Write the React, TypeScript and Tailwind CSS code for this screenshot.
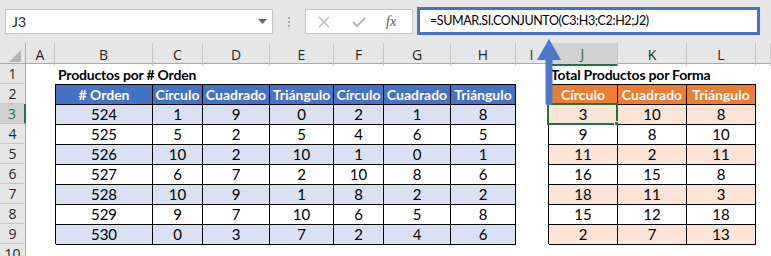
import React from 'react';

const cols =
  'grid grid-cols-[26px_29px_98px_50px_67px_64px_50px_67px_65px_32px_70px_69px_69px_15px]';

const letters = ['A', 'B', 'C', 'D', 'E', 'F', 'G', 'H', 'I', 'J', 'K', 'L', ''];

const orders = [
  ['524', '1', '9', '0', '2', '1', '8'],
  ['525', '5', '2', '5', '4', '6', '5'],
  ['526', '10', '2', '10', '1', '0', '1'],
  ['527', '6', '7', '2', '10', '8', '6'],
  ['528', '10', '9', '1', '8', '2', '2'],
  ['529', '9', '7', '10', '6', '5', '8'],
  ['530', '0', '3', '7', '2', '4', '6'],
];

const totals = [
  ['3', '10', '8'],
  ['9', '8', '10'],
  ['11', '2', '11'],
  ['16', '15', '8'],
  ['18', '11', '3'],
  ['15', '12', '18'],
  ['2', '7', '13'],
];

const head1 = ['# Orden', 'Círculo', 'Cuadrado', 'Triángulo', 'Círculo', 'Cuadrado', 'Triángulo'];
const head2 = ['Círculo', 'Cuadrado', 'Triángulo'];

const FormulaBar: React.FC = () => (
  <div className="h-[43px] bg-[#e6e6e6] flex items-start pt-[9px] pl-[5px]">
    {/* Name box */}
    <div className="w-[268px] h-[25px] bg-white border border-[#c6c6c6] flex items-center justify-between pl-[6px] pr-[5px]">
      <span className="text-[14px] text-[#222]">J3</span>
      <svg width="9" height="5" viewBox="0 0 9 5">
        <path d="M0 0 H9 L4.5 5 Z" fill="#6b6b6b" />
      </svg>
    </div>
    <div className="w-[32px] h-[25px] flex flex-col items-center justify-center gap-[2px]">
      <div className="w-[2px] h-[2px] bg-[#a8a8a8]" />
      <div className="w-[2px] h-[2px] bg-[#a8a8a8]" />
      <div className="w-[2px] h-[2px] bg-[#a8a8a8]" />
    </div>
    {/* Cancel / enter / fx */}
    <div className="w-[108px] h-[25px] bg-white border border-[#c6c6c6] flex items-center pl-[12px]">
      <svg width="12" height="12" viewBox="0 0 12 12">
        <path d="M1 1 L11 11 M11 1 L1 11" stroke="#b9b9b9" strokeWidth="1.3" />
      </svg>
      <svg width="14" height="12" viewBox="0 0 14 12" className="ml-[22px]">
        <path d="M1 6 L5 10 L13 2" stroke="#b9b9b9" strokeWidth="2" fill="none" />
      </svg>
      <span className="ml-[20px] text-[14px] italic text-[#555] font-['Liberation_Serif',serif]">fx</span>
    </div>
    {/* Formula input */}
    <div className="ml-[4px] -mt-[2px] w-[343px] h-[28px] bg-white border-[3px] border-[#4472c4] flex items-center pl-[10px]">
      <span className="text-[12.5px] tracking-[-0.4px] text-black">=SUMAR.SI.CONJUNTO(C3:H3;C2:H2;J2)</span>
    </div>
  </div>
);

const ColumnHeader: React.FC = () => (
  <div className={`${cols} h-[21px] bg-[#e6e6e6] border-b border-[#ababab]`}>
    <div className="border-r border-[#ababab] flex items-end justify-end pr-[4px] pb-[4px]">
      <svg width="12" height="12" viewBox="0 0 12 12">
        <path d="M12 0 V12 H0 Z" fill="#b4b4b4" />
      </svg>
    </div>
    {letters.map((l, i) =>
      l === 'J' ? (
        <div
          key={i}
          className="bg-[#d2d2d2] border-r border-[#c6c6c6] border-b-2 border-b-[#217346] flex items-center justify-center text-[14px] text-[#217346] font-['Open_Sans',sans-serif]"
        >
          {l}
        </div>
      ) : (
        <div
          key={i}
          className="border-r border-[#c6c6c6] flex items-center justify-center text-[14px] text-[#262626] font-['Open_Sans',sans-serif]"
        >
          {l}
        </div>
      )
    )}
  </div>
);

const Sheet: React.FC = () => (
  <div className={`${cols} grid-rows-[repeat(10,20px)]`}>
    {Array.from({ length: 10 }, (_, i) =>
      i === 2 ? (
        <div
          key={i}
          style={{ gridRow: i + 1 }}
          className="col-start-1 bg-[#d2d2d2] border-b border-[#c6c6c6] border-r-2 border-r-[#217346] flex items-center justify-center text-[14px] text-[#217346] font-['Open_Sans',sans-serif]"
        >
          {i + 1}
        </div>
      ) : (
        <div
          key={i}
          style={{ gridRow: i + 1 }}
          className="col-start-1 bg-[#e6e6e6] border-b border-[#c6c6c6] border-r border-r-[#ababab] flex items-center justify-center text-[14px] text-[#262626] font-['Open_Sans',sans-serif]"
        >
          {i + 1}
        </div>
      )
    )}

    <div className="col-start-3 col-span-7 row-start-1 flex items-center pl-[3px] text-[14px] tracking-[-0.2px] font-bold text-black">
      Productos por # Orden
    </div>
    <div className="col-start-11 col-span-3 row-start-1 flex items-center pl-[3px] text-[14px] tracking-[-0.2px] font-bold text-black">
      Total Productos por Forma
    </div>

    {/* Table 1 */}
    <div className="col-start-3 col-span-7 row-start-2 row-span-8 grid grid-cols-[97px_50px_67px_64px_50px_67px_65px] grid-rows-[repeat(8,20px)] border-l border-t border-black">
      {head1.map((h, i) => (
        <div
          key={i}
          className="bg-[#4472c4] border-r border-b border-black flex items-center justify-center text-[14px] font-bold text-white"
        >
          {h}
        </div>
      ))}
      {orders.map((row, r) =>
        row.map((v, c) => (
          <div
            key={`${r}-${c}`}
            className={`${r % 2 === 0 ? 'bg-[#d9e1f2]' : 'bg-white'} border-r border-b border-black flex items-center justify-center text-[15px] text-black`}
          >
            {v}
          </div>
        ))
      )}
    </div>

    {/* Table 2 */}
    <div className="col-start-11 col-span-3 row-start-2 row-span-8 grid grid-cols-[69px_69px_69px] grid-rows-[repeat(8,20px)] border-l border-t border-black">
      {head2.map((h, i) => (
        <div
          key={i}
          className="bg-[#ed7d31] border-r border-b border-black flex items-center justify-center text-[14px] font-bold text-white"
        >
          {h}
        </div>
      ))}
      {totals.map((row, r) =>
        row.map((v, c) => (
          <div
            key={`${r}-${c}`}
            className={`relative ${r % 2 === 0 ? 'bg-[#fce4d6]' : 'bg-white'} border-r border-b border-black flex items-center justify-center text-[15px] text-black`}
          >
            {r === 0 && c === 0 && (
              <div className="absolute -left-[2px] -top-[2px] -right-px -bottom-px border-2 border-[#217346]">
                <div className="absolute -right-[4px] -bottom-[4px] w-[6px] h-[6px] bg-[#217346] border border-white" />
              </div>
            )}
            {v}
          </div>
        ))
      )}
    </div>
  </div>
);

export default function App() {
  return (
    <div className="relative w-[771px] h-[256px] overflow-hidden bg-white font-['Lato','Liberation_Sans',sans-serif]">
      <FormulaBar />
      <ColumnHeader />
      <Sheet />
      {/* Callout arrow */}
      <svg className="absolute left-[536px] top-[37px]" width="28" height="70" viewBox="0 0 28 70">
        <path d="M13 2 L25 23 H16.5 V66 Q16.5 68 14.5 68 H11.5 Q9.5 68 9.5 66 V23 H1 Z" fill="#4a78cc" />
      </svg>
    </div>
  );
}
